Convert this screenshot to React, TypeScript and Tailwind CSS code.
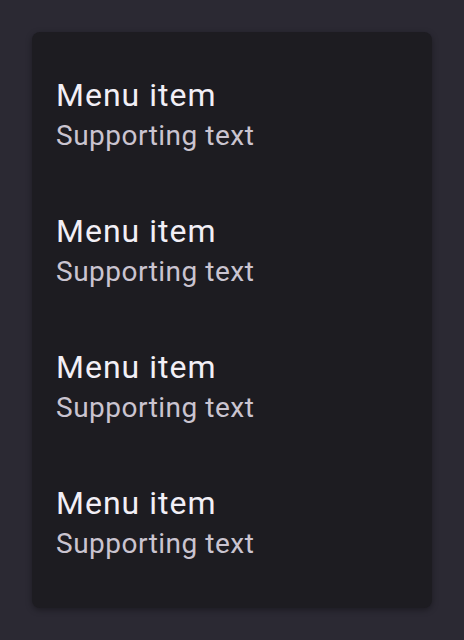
export default function App() {
  const items = [1, 2, 3, 4];
  return (
    <div className="min-h-[640px] w-[464px] bg-[#2b2933] p-8" style={{ fontFamily: "Roboto, 'Noto Sans', sans-serif" }}>
      <div className="flex flex-col rounded-lg bg-[#1d1c21] py-4 shadow-[0_2px_6px_rgba(0,0,0,0.35)]">
        {items.map((i) => (
          <div key={i} className="flex h-[136px] flex-col px-6 pt-[25px]">
            <div className="text-[32px] leading-[44px] tracking-[1px] text-[#f2eff6]">Menu item</div>
            <div className="text-[28px] leading-[38px] tracking-[0.5px] text-[#cac4d0]">Supporting text</div>
          </div>
        ))}
      </div>
    </div>
  );
}
